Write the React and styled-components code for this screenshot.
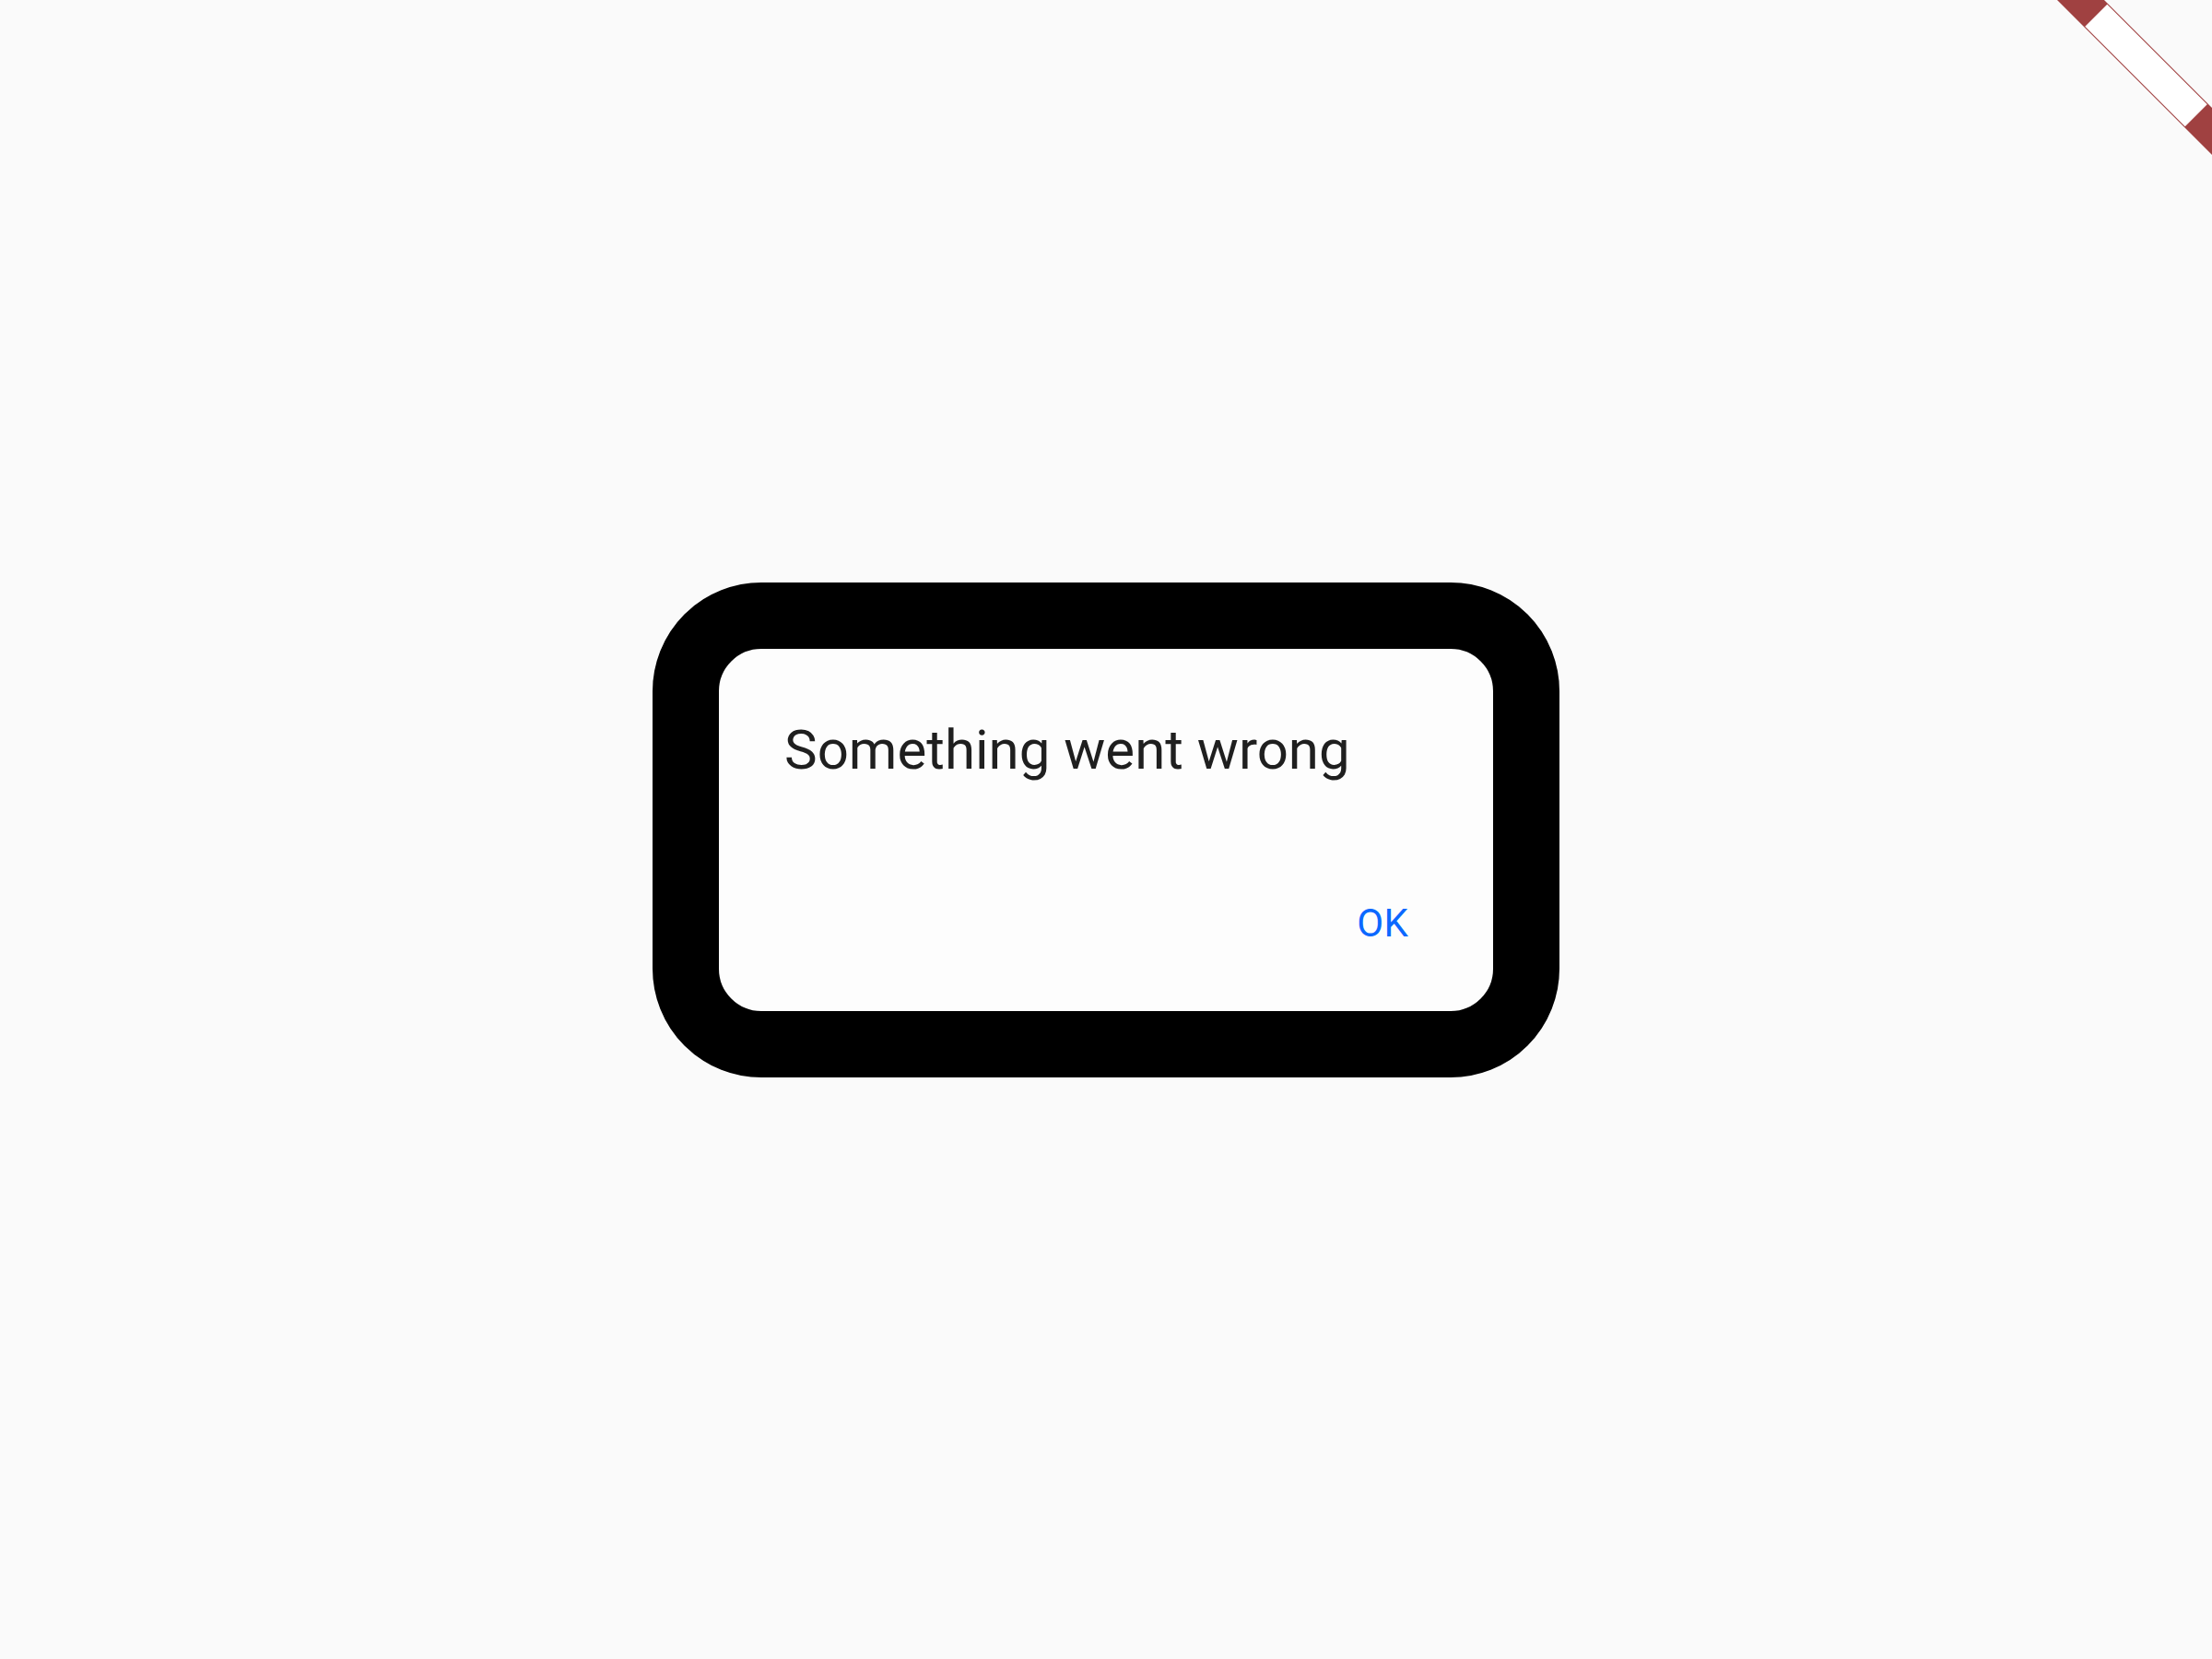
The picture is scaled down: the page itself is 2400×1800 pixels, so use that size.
import React from 'react'
import styled, { createGlobalStyle } from 'styled-components'

const GlobalStyle = createGlobalStyle`
  html, body {
    margin: 0;
    padding: 0;
    background: #fafafa;
  }
  body {
    font-family: Roboto, "Liberation Sans", sans-serif;
  }
`

const Screen = styled.div`
  position: relative;
  width: 2400px;
  height: 1800px;
  display: flex;
  align-items: center;
  justify-content: center;
  background: #fafafa;
  overflow: hidden;
`

const Dialog = styled.div`
  box-sizing: border-box;
  width: 984px;
  display: flex;
  flex-direction: column;
  gap: 122px;
  padding: 70px 92px 70px 71px;
  border: 72px solid #000;
  border-radius: 118px;
  background: #fdfdfd;
`

const Title = styled.div`
  font-size: 60px;
  line-height: 80px;
  color: #1f1f1f;
`

const Actions = styled.div`
  display: flex;
  justify-content: flex-end;
`

const TextButton = styled.button`
  border: 0;
  padding: 0;
  background: none;
  font-family: Roboto, "Liberation Sans", sans-serif;
  font-size: 42px;
  line-height: 51px;
  letter-spacing: 0.25px;
  color: #0b68ff;
  cursor: pointer;
`

const Banner = styled.svg`
  position: absolute;
  top: 0;
  right: 0;
  width: 200px;
  height: 200px;
`

function DebugBanner() {
  return (
    <Banner viewBox="0 0 200 200">
      <polygon points="32,0 83,0 200,117 200,168" fill="#a04141" />
      <polygon points="86.25,4.75 62.25,28.75 170.75,137.25 194.75,113.25" fill="#ffffff" />
    </Banner>
  )
}

export default function App() {
  return (
    <>
      <GlobalStyle />
      <Screen>
        <Dialog>
          <Title>Something went wrong</Title>
          <Actions>
            <TextButton>OK</TextButton>
          </Actions>
        </Dialog>
        <DebugBanner />
      </Screen>
    </>
  )
}
